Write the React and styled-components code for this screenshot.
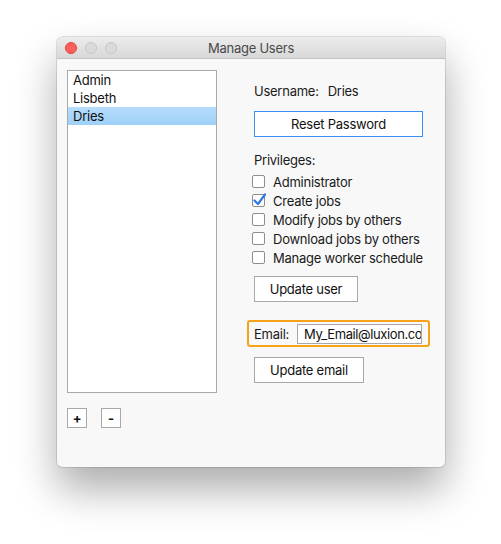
import React from "react";
import styled, { createGlobalStyle } from "styled-components";

const Global = createGlobalStyle`
  html, body { margin: 0; padding: 0; background: #ffffff; }
  body { font-family: Inter, "Noto Sans", "Liberation Sans", sans-serif; font-size: 13px; letter-spacing: -0.25px; color: #1a1a1a; }
  * { box-sizing: border-box; }
`;

const Page = styled.div`
  width: 501px;
  height: 544px;
  padding: 37px 0 0 57px;
`;

const Window = styled.div`
  width: 388px;
  height: 430px;
  background: #f8f8f8;
  border-radius: 5px;
  overflow: hidden;
  box-shadow: 0 22px 42px rgba(0, 0, 0, 0.33), 0 0 0 0.5px rgba(0, 0, 0, 0.22);
  display: flex;
  flex-direction: column;
`;

const TitleBar = styled.div`
  height: 22px;
  flex: none;
  background: linear-gradient(#ececec, #d8d8d8);
  border-bottom: 1px solid #c4c4c4;
  display: grid;
  grid-template-columns: 1fr auto 1fr;
  align-items: center;
  padding: 0 8px;
`;

const Lights = styled.div`
  display: flex;
  gap: 8px;
`;

const Light = styled.span`
  width: 12px;
  height: 12px;
  border-radius: 50%;
  background: ${(p) => (p.$red ? "#fc605c" : "#dadada")};
  border: 0.5px solid ${(p) => (p.$red ? "#e0443e" : "#c6c6c6")};
`;

const Title = styled.div`
  font-size: 13px;
  color: #4a4a4a;
`;

const Content = styled.div`
  flex: 1;
  display: flex;
  padding: 11px 10px 0 10px;
`;

const LeftCol = styled.div`
  width: 150px;
  display: flex;
  flex-direction: column;
`;

const List = styled.div`
  height: 323px;
  background: #ffffff;
  border: 1px solid #a9a9a9;
  display: flex;
  flex-direction: column;
`;

const ListItem = styled.div`
  height: 18px;
  line-height: 19px;
  padding-left: 5px;
  color: #111;
  background: ${(p) => (p.$selected ? "linear-gradient(#b6dcfc, #9fd0f8)" : "transparent")};
`;

const SmallButtons = styled.div`
  display: flex;
  gap: 14px;
  margin-top: 15px;
`;

const SmallButton = styled.div`
  width: 20px;
  height: 20px;
  border: 1px solid #a8a8a8;
  background: #ffffff;
  display: flex;
  align-items: center;
  justify-content: center;
  font-weight: 700;
  font-size: 13px;
  color: #111;
`;

const RightCol = styled.div`
  margin-left: 37px;
  display: flex;
  flex-direction: column;
  align-items: flex-start;
`;

const UsernameRow = styled.div`
  margin-top: 13px;
  line-height: 16px;
  display: flex;
  gap: 9px;
`;

const Button = styled.div`
  width: ${(p) => p.$w}px;
  height: 26px;
  margin-top: ${(p) => p.$mt}px;
  background: #ffffff;
  border: 1px solid ${(p) => (p.$focus ? "#3a8ef6" : "#a8a8a8")};
  display: flex;
  align-items: center;
  justify-content: center;
  color: #111;
`;

const Label = styled.div`
  margin-top: 15px;
  line-height: 16px;
`;

const Checks = styled.div`
  margin-top: 4px;
  display: flex;
  flex-direction: column;
`;

const CheckRow = styled.div`
  height: 19px;
  display: flex;
  align-items: center;
  gap: 8px;
  margin-left: -2px;
`;

const Box = styled.span`
  position: relative;
  width: 13px;
  height: 13px;
  border: 1px solid #8e8e8e;
  border-radius: 2px;
  background: #ffffff;
  flex: none;
`;

const Tick = styled.svg`
  position: absolute;
  left: 0px;
  top: -3px;
`;

const EmailFrame = styled.div`
  margin: 18px 0 0 -7px;
  width: 183px;
  height: 27px;
  border: 2px solid #f7a21b;
  border-radius: 3px;
  display: flex;
  align-items: center;
  padding-left: 5px;
  gap: 8px;
`;

const EmailInput = styled.div`
  width: 125px;
  height: 20px;
  background: #ffffff;
  border: 1px solid #a8a8a8;
  line-height: 18px;
  padding-left: 6px;
  letter-spacing: -0.4px;
  white-space: nowrap;
  overflow: hidden;
  color: #111;
`;

const checks = [
  ["Administrator", false],
  ["Create jobs", true],
  ["Modify jobs by others", false],
  ["Download jobs by others", false],
  ["Manage worker schedule", false],
];

export default function App() {
  return (
    <Page>
      <Global />
      <Window>
        <TitleBar>
          <Lights>
            <Light $red />
            <Light />
            <Light />
          </Lights>
          <Title>Manage Users</Title>
          <span />
        </TitleBar>
        <Content>
          <LeftCol>
            <List>
              <ListItem>Admin</ListItem>
              <ListItem>Lisbeth</ListItem>
              <ListItem $selected>Dries</ListItem>
            </List>
            <SmallButtons>
              <SmallButton>+</SmallButton>
              <SmallButton>-</SmallButton>
            </SmallButtons>
          </LeftCol>
          <RightCol>
            <UsernameRow>
              <span>Username:</span>
              <span>Dries</span>
            </UsernameRow>
            <Button $w={169} $mt={12} $focus>Reset Password</Button>
            <Label>Privileges:</Label>
            <Checks>
              {checks.map(([t, c]) => (
                <CheckRow key={t}>
                  <Box>
                    {c && (
                      <Tick width="14" height="15" viewBox="0 0 14 15">
                        <path d="M1.5 8.5 L5 12 L12 2.5" fill="none" stroke="#2c7be5" strokeWidth="2.2" strokeLinecap="round" strokeLinejoin="round" />
                      </Tick>
                    )}
                  </Box>
                  <span>{t}</span>
                </CheckRow>
              ))}
            </Checks>
            <Button $w={104} $mt={9}>Update user</Button>
            <EmailFrame>
              <span>Email:</span>
              <EmailInput>My_Email@luxion.co</EmailInput>
            </EmailFrame>
            <Button $w={110} $mt={10}>Update email</Button>
          </RightCol>
        </Content>
      </Window>
    </Page>
  );
}
